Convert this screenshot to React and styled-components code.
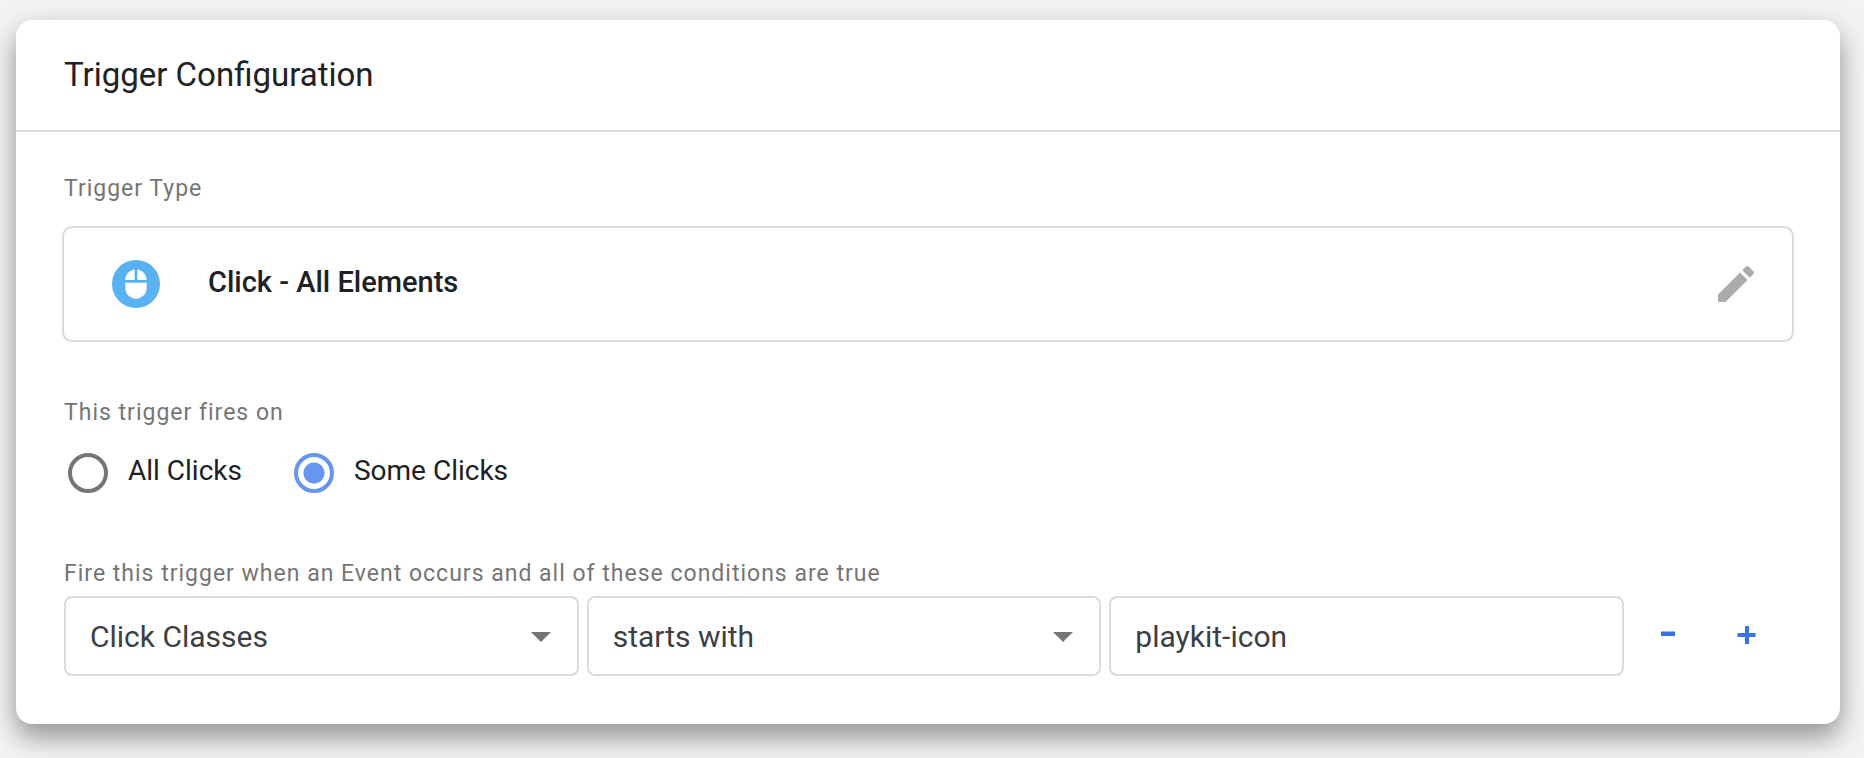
import React, { useState } from "react";
import styled, { createGlobalStyle } from "styled-components";

const GlobalStyle = createGlobalStyle`
  *, *::before, *::after { box-sizing: border-box; }
  body {
    margin: 0;
    background: #f1f3f4;
    color: #202124;
    font-family: Roboto, "Liberation Sans", sans-serif;
    -webkit-font-smoothing: antialiased;
  }
`;

const Page = styled.main`
  padding: 20px 24px 34px 16px;
`;

const Card = styled.section`
  background: #fff;
  border-radius: 16px;
  box-shadow: 0 14px 24px rgba(0, 0, 0, 0.3), 0 8px 36px rgba(0, 0, 0, 0.12);
`;

const CardHeader = styled.header`
  padding: 35px 48px;
  border-bottom: 2px solid #dadae0;
`;

const Title = styled.h2`
  margin: 0;
  font-size: 33px;
  font-weight: 400;
  line-height: 40px;
`;

const CardBody = styled.div`
  padding: 40px 46px 48px;
`;

const Group = styled.div`
  margin: 0;
  padding: 0 2px;
  border: 0;
`;

const Caption = styled.div`
  padding: 2px 0 0;
  font-size: 23px;
  line-height: 30px;
  letter-spacing: 1px;
  color: #757575;
`;

const TypeBox = styled.div`
  display: flex;
  align-items: center;
  margin: 22px 0 54px;
  padding: 32px 32px 32px 48px;
  border: 2px solid #dadae0;
  border-radius: 10px;
`;

const TypeIcon = styled.span`
  display: grid;
  place-items: center;
  width: 48px;
  height: 48px;
  border-radius: 50%;
  background: #58b2f1;
`;

const TypeName = styled.span`
  flex: 1;
  padding: 0 48px 4px;
  font-size: 29px;
  font-weight: 500;
  line-height: 36px;
`;

const IconButton = styled.button`
  display: grid;
  place-items: center;
  padding: 0;
  width: ${(p) => p.$width}px;
  height: 48px;
  border: 0;
  background: none;
  color: ${(p) => p.$color};
  cursor: pointer;
`;

const RadioRow = styled.div`
  display: flex;
  gap: 52px;
  padding: 25px 4px 64px;
`;

const RadioLabel = styled.label`
  display: flex;
  gap: 20px;
  font-size: 28px;
  line-height: 36px;
  cursor: pointer;
`;

const Radio = styled.input`
  appearance: none;
  margin: 0;
  width: 40px;
  height: 40px;
  border: 4px solid #757575;
  border-radius: 50%;
  cursor: pointer;

  &:checked {
    border-color: #6796f0;
    background: radial-gradient(circle, #6796f0 10px, transparent 11px);
  }
`;

const ConditionRow = styled.div`
  display: flex;
  align-items: center;
  gap: 8px;
  margin-top: 7px;
`;

const FieldWrap = styled.div`
  position: relative;
  flex: 1;
  min-width: 0;
`;

const Field = styled.input`
  display: block;
  width: 100%;
  height: 80px;
  margin: 0;
  padding: 0 24px;
  border: 2px solid #dadae0;
  border-radius: 8px;
  background: #fff;
  color: #3c4043;
  font: inherit;
  font-size: 30px;
  appearance: none;
`;

const Arrow = styled.svg`
  position: absolute;
  right: 28px;
  top: 36px;
  pointer-events: none;
`;

const RowActions = styled.div`
  display: flex;
  gap: 6px;
  padding-right: 10px;
`;

function SelectField({ label, options }) {
  return (
    <FieldWrap>
      <Field as="select" aria-label={label} defaultValue={options[0]}>
        {options.map((o) => (
          <option key={o}>{o}</option>
        ))}
      </Field>
      <Arrow width="20" height="10" viewBox="0 0 20 10" aria-hidden="true">
        <path d="M0 0h20L10 10z" fill="#757575" />
      </Arrow>
    </FieldWrap>
  );
}

export default function App() {
  const [scope, setScope] = useState("Some Clicks");
  return (
    <>
      <GlobalStyle />
      <Page>
        <Card>
          <CardHeader>
            <Title>Trigger Configuration</Title>
          </CardHeader>
          <CardBody>
            <Group>
              <Caption>Trigger Type</Caption>
            </Group>
            <TypeBox>
              <TypeIcon>
                <svg width="32" height="32" viewBox="0 0 24 24" fill="#fff" aria-hidden="true">
                  <path d="M13 1.07V9h7c0-4.08-3.05-7.44-7-7.93zM4 15c0 4.42 3.58 8 8 8s8-3.58 8-8v-4H4v4zm7-13.93C7.05 1.56 4 4.92 4 9h7V1.07z" />
                </svg>
              </TypeIcon>
              <TypeName>Click - All Elements</TypeName>
              <IconButton type="button" aria-label="Edit trigger type" $width={48} $color="#ababab">
                <svg width="48" height="48" viewBox="0 0 24 24" fill="currentColor" aria-hidden="true">
                  <path d="M3 17.25V21h3.75L17.81 9.94l-3.75-3.75L3 17.25zM20.71 7.04c.39-.39.39-1.02 0-1.41l-2.34-2.34c-.39-.39-1.02-.39-1.41 0l-1.83 1.83 3.75 3.75 1.83-1.83z" />
                </svg>
              </IconButton>
            </TypeBox>
            <Group as="fieldset">
              <Caption as="legend">This trigger fires on</Caption>
              <RadioRow>
                {["All Clicks", "Some Clicks"].map((name) => (
                  <RadioLabel key={name}>
                    <Radio
                      type="radio"
                      name="scope"
                      checked={scope === name}
                      onChange={() => setScope(name)}
                    />
                    {name}
                  </RadioLabel>
                ))}
              </RadioRow>
            </Group>
            <Group>
              <Caption>Fire this trigger when an Event occurs and all of these conditions are true</Caption>
              <ConditionRow>
                <SelectField label="Variable" options={["Click Classes"]} />
                <SelectField label="Operator" options={["starts with"]} />
                <FieldWrap>
                  <Field type="text" aria-label="Value" defaultValue="playkit-icon" />
                </FieldWrap>
                <RowActions>
                  <IconButton type="button" aria-label="Remove condition" $width={72} $color="#3773e1">
                    <svg width="20" height="20" viewBox="0 0 20 20" fill="currentColor" aria-hidden="true">
                      <path d="M3 5.5h14v4.5H3z" />
                    </svg>
                  </IconButton>
                  <IconButton type="button" aria-label="Add condition" $width={72} $color="#3773e1">
                    <svg width="20" height="20" viewBox="0 0 20 20" fill="currentColor" aria-hidden="true">
                      <path d="M9 0h4v7h6.500v4H13v7H9v-7H1.500V7H9z" />
                    </svg>
                  </IconButton>
                </RowActions>
              </ConditionRow>
            </Group>
          </CardBody>
        </Card>
      </Page>
    </>
  );
}
